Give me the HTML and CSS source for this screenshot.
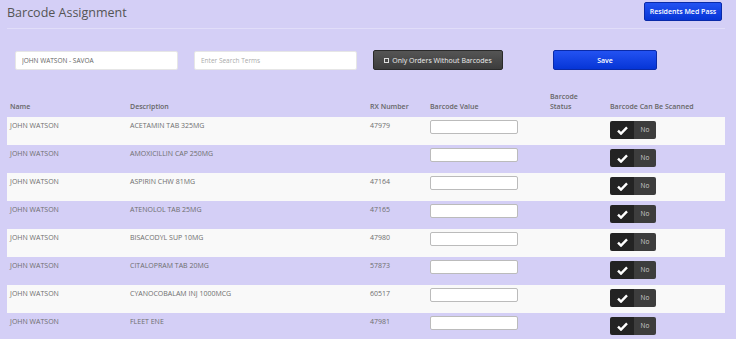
FILE: index.html
```html
<!DOCTYPE html>
<html lang="en">
<head>
<meta charset="UTF-8">
<meta name="viewport" content="width=device-width, initial-scale=1.0">
<title>Barcode Assignment</title>
<link rel="stylesheet" href="styles.css">
</head>
<body>

<div class="page-header">
    <h1>Barcode Assignment</h1>
    <button class="btn-blue btn-med-pass">Residents Med Pass</button>
</div>

<div class="toolbar">
    <input type="text" class="field" value="JOHN WATSON - SAVOA">
    <input type="text" class="field" placeholder="Enter Search Terms">
    <button class="btn-dark"><span class="box"></span>Only Orders Without Barcodes</button>
    <button class="btn-blue btn-save">Save</button>
</div>

<table class="orders">
    <thead>
        <tr>
            <th class="col-name">Name</th>
            <th class="col-desc">Description</th>
            <th class="col-rx">RX Number</th>
            <th class="col-value">Barcode Value</th>
            <th class="col-status">Barcode<br>Status</th>
            <th>Barcode Can Be Scanned</th>
        </tr>
    </thead>
    <tbody id="rows"></tbody>
</table>

<script>
    // orders for the selected resident
    const orders = [
        ['JOHN WATSON', 'ACETAMIN TAB 325MG', '47979'],
        ['JOHN WATSON', 'AMOXICILLIN CAP 250MG', ''],
        ['JOHN WATSON', 'ASPIRIN CHW 81MG', '47164'],
        ['JOHN WATSON', 'ATENOLOL TAB 25MG', '47165'],
        ['JOHN WATSON', 'BISACODYL SUP 10MG', '47980'],
        ['JOHN WATSON', 'CITALOPRAM TAB 20MG', '57873'],
        ['JOHN WATSON', 'CYANOCOBALAM INJ 1000MCG', '60517'],
        ['JOHN WATSON', 'FLEET ENE', '47981']
    ];

    const tbody = document.getElementById('rows');
    orders.forEach(function(order) {
        const row = document.createElement('tr');
        row.innerHTML = `
            <td>${order[0]}</td>
            <td>${order[1]}</td>
            <td>${order[2]}</td>
            <td><input type="text" class="barcode"></td>
            <td></td>
            <td>
                <div class="toggle">
                    <span class="on"><svg width="11" height="9" viewBox="0 0 11 9"><path d="M1 4.6 L4 7.6 L10 1.4" fill="none" stroke="white" stroke-width="2.4"/></svg></span>
                    <span class="off">No</span>
                </div>
            </td>
        `;
        tbody.appendChild(row);
    });
</script>
</body>
</html>
```

FILE: styles.css
```css
* {
    box-sizing: border-box;
    margin: 0;
    padding: 0;
}
body {
    font-family: "Open Sans", sans-serif;
    font-size: 7px;
    color: #6e6e6e;
    background-color: #d4cff6;
    overflow: hidden;
}

/* header */
.page-header {
    display: flex;
    justify-content: space-between;
    align-items: flex-start;
    margin: 0 11px 0 7px;
    height: 29px;
    border-bottom: 1px solid #e1ddf9;
}
.page-header h1 {
    font-size: 12.5px;
    font-weight: normal;
    color: #555;
    margin-top: 4px;
}

.btn-blue {
    background: linear-gradient(#2352f2, #0635d6);
    border: 1px solid #0a2aa8;
    border-radius: 2px;
    color: white;
    font-family: "Open Sans", sans-serif;
    font-size: 7px;
    font-weight: 600;
    cursor: pointer;
}
.btn-med-pass {
    width: 78px;
    height: 19px;
    margin-top: 2px;
    margin-right: 3px;
}

/* search bar */
.toolbar {
    display: flex;
    align-items: center;
    margin: 21px 0 0 15px;
}
.field {
    width: 163px;
    height: 19px;
    border: 1px solid #e6e6e6;
    border-radius: 2px;
    background: white;
    padding: 0 6px;
    font-family: "Open Sans", sans-serif;
    font-size: 6.5px;
    color: #666;
    margin-right: 16px;
}
.field::placeholder {
    color: #aaa;
}
.btn-dark {
    width: 130px;
    height: 20px;
    background: linear-gradient(#555, #3c3c3c);
    border: 1px solid #2a2a2a;
    border-radius: 2px;
    color: #eee;
    font-family: "Open Sans", sans-serif;
    font-size: 7px;
    display: flex;
    align-items: center;
    justify-content: center;
    gap: 3px;
    cursor: pointer;
    margin-right: 50px;
}
.btn-dark .box {
    width: 5px;
    height: 5px;
    border: 1px solid #ddd;
}
.btn-save {
    width: 104px;
    height: 20px;
}

/* table */
.orders {
    border-collapse: collapse;
    margin: 20px 0 0 7px;
    width: 718px;
    table-layout: fixed;
}
.orders th {
    text-align: left;
    vertical-align: bottom;
    font-weight: 600;
    font-size: 7px;
    line-height: 10px;
    color: #666;
    padding: 0 3px 5px;
    height: 27px;
}
.col-name { width: 120px; }
.col-desc { width: 240px; }
.col-rx { width: 60px; }
.col-value { width: 120px; }
.col-status { width: 60px; }

.orders td {
    height: 28px;
    padding: 4px 3px 0;
    vertical-align: top;
    line-height: 10px;
}
.orders tbody tr:nth-child(odd) {
    background-color: #f9f9f9;
}
.barcode {
    width: 88px;
    height: 14px;
    border: 1px solid #bbb;
    border-radius: 2px;
    background: white;
    margin-top: -1px;
}
.toggle {
    display: flex;
    width: 46px;
    height: 18px;
    border-radius: 2px;
    overflow: hidden;
}
.toggle .on {
    width: 24px;
    background: #232323;
    display: flex;
    align-items: center;
    justify-content: center;
}
.toggle .off {
    flex: 1;
    background: #3d3d3d;
    color: #ccc;
    font-size: 6.5px;
    display: flex;
    align-items: center;
    justify-content: center;
}
```
